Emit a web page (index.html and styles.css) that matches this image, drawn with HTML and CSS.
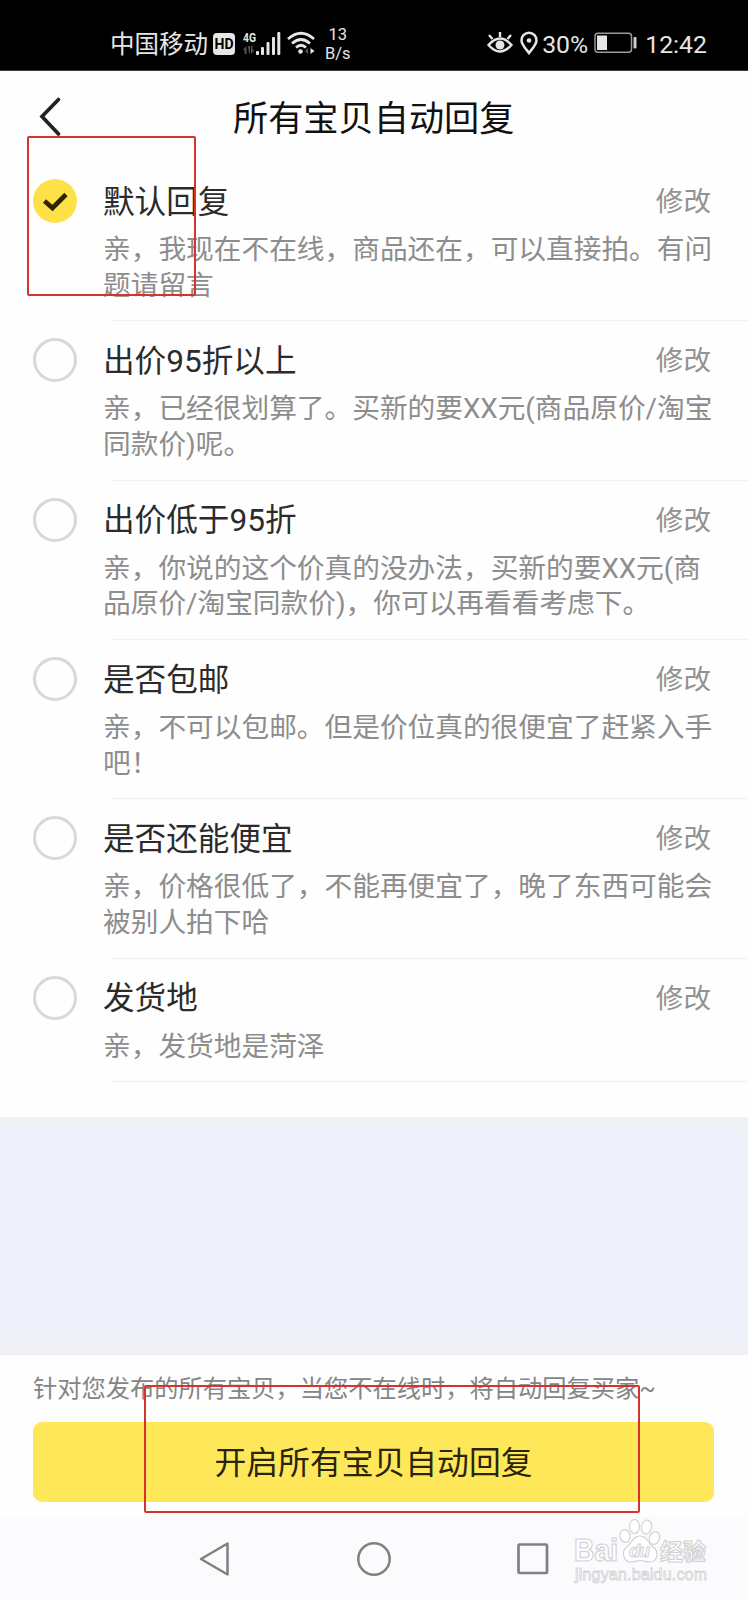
FILE: index.html
```html
<!DOCTYPE html>
<html lang="zh-CN">
<head>
<meta charset="utf-8">
<title>所有宝贝自动回复</title>
<link rel="stylesheet" href="styles.css">
</head>
<body>
<div class="screen">
  <div class="status">
    <div class="status-left">
      <span class="carrier">中国移动</span>
      <span class="hd">HD</span>
      <svg class="signal" width="38" height="26" viewBox="0 0 38 26">
        <text class="g4" x="0" y="11" textLength="13" lengthAdjust="spacingAndGlyphs">4G</text>
        <g fill="#555"><path d="M0 19l3.500-4v8h-2v-4zM5 15h2v8l-1-1zM8 15h1.500v4h2l-3.500 4z"/></g>
        <g fill="#e6e6e6"><rect x="13" y="20" width="3" height="4" rx="1"/><rect x="18" y="16" width="3" height="8" rx="1"/><rect x="23.500" y="11" width="3" height="13" rx="1"/><rect x="29" y="6" width="3" height="18" rx="1"/><rect x="34.300" y="1" width="3" height="23" rx="1"/></g>
      </svg>
      <svg class="wifi" width="29" height="24" viewBox="0 0 29 24">
        <g fill="none" stroke="#e6e6e6" stroke-width="2.700"><path d="M1 8Q14 -3.500 27 8"/><path d="M5 12.500Q14 4.500 23 12.500"/><path d="M9 16.500Q14 12 19 16.500"/></g>
        <circle cx="13.500" cy="20.500" r="2.300" fill="#e6e6e6"/>
        <path d="M21 17v6l-3-3z" fill="#555"/><path d="M23.500 17v6l4-3z" fill="#e6e6e6"/>
      </svg>
      <span class="speed"><span>13</span><span>B/s</span></span>
    </div>
    <div class="status-right">
      <svg class="eye" width="26" height="24" viewBox="0 0 26 24">
        <g fill="none" stroke="#e6e6e6" stroke-width="2.400"><path d="M1.500 14Q13 1 24.500 14Q13 27 1.500 14z"/><path d="M13 6V1M5.500 8L2 4M20.500 8L24 4"/></g>
        <circle cx="13" cy="14" r="4.500" fill="#e6e6e6"/>
      </svg>
      <svg class="pin" width="18" height="24" viewBox="0 0 18 24">
        <path d="M9 22C6 18 1.500 13.500 1.500 9.500a7.500 7.800 0 0 1 15 0C16.500 13.500 12 18 9 22z" fill="none" stroke="#e6e6e6" stroke-width="2.500"/>
        <circle cx="9" cy="9.500" r="2.300" fill="#e6e6e6"/>
      </svg>
      <span class="percent">30%</span>
      <svg class="battery" width="43" height="22" viewBox="0 0 43 22">
        <rect x="1" y="1.200" width="36.500" height="19" rx="3" fill="none" stroke="#999" stroke-width="1.500"/>
        <rect x="3" y="3.500" width="10" height="14.500" fill="#e6e6e6"/><rect x="39.500" y="5" width="3" height="11.500" rx="1" fill="#ccc"/>
      </svg>
      <span class="clock">12:42</span>
    </div>
  </div>

  <header class="header">
    <svg class="back" width="24" height="42" viewBox="0 0 24 42"><path d="M20.500 3.500L4 20.500L20.500 38" fill="none" stroke="#222" stroke-width="3.700" stroke-linecap="round"/></svg>
    <h1 class="title">所有宝贝自动回复</h1>
  </header>

  <main class="list">
    <section class="item">
      <span class="radio checked"><svg width="44" height="44" viewBox="0 0 44 44"><path d="M11.500 22L19.500 29L33 15.500" fill="none" stroke="#2e2400" stroke-width="4.600"/></svg></span>
      <div class="content"><div class="row"><h2 class="name">默认回复</h2><span class="edit">修改</span></div>
      <p class="desc">亲，我现在不在线，商品还在，可以直接拍。有问<br>题请留言</p></div>
    </section>
    <section class="item">
      <span class="radio"></span>
      <div class="content"><div class="row"><h2 class="name">出价95折以上</h2><span class="edit">修改</span></div>
      <p class="desc">亲，已经很划算了。买新的要XX元(商品原价/淘宝<br>同款价)呢。</p></div>
    </section>
    <section class="item">
      <span class="radio"></span>
      <div class="content"><div class="row"><h2 class="name">出价低于95折</h2><span class="edit">修改</span></div>
      <p class="desc">亲，你说的这个价真的没办法，买新的要XX元(商<br>品原价/淘宝同款价)，你可以再看看考虑下。</p></div>
    </section>
    <section class="item">
      <span class="radio"></span>
      <div class="content"><div class="row"><h2 class="name">是否包邮</h2><span class="edit">修改</span></div>
      <p class="desc">亲，不可以包邮。但是价位真的很便宜了赶紧入手<br>吧！</p></div>
    </section>
    <section class="item">
      <span class="radio"></span>
      <div class="content"><div class="row"><h2 class="name">是否还能便宜</h2><span class="edit">修改</span></div>
      <p class="desc">亲，价格很低了，不能再便宜了，晚了东西可能会<br>被别人拍下哈</p></div>
    </section>
    <section class="item short">
      <span class="radio"></span>
      <div class="content"><div class="row"><h2 class="name">发货地</h2><span class="edit">修改</span></div>
      <p class="desc">亲，发货地是菏泽</p></div>
    </section>
  </main>

  <div class="spacer"></div>

  <footer class="footer">
    <p class="hint">针对您发布的所有宝贝，当您不在线时，将自动回复买家~</p>
    <button class="enable">开启所有宝贝自动回复</button>
  </footer>

  <nav class="nav">
    <svg width="36" height="40" viewBox="0 0 36 40"><path d="M4 20L30.500 4.500V35.500z" fill="none" stroke="#808082" stroke-width="2.500" stroke-linejoin="round"/></svg>
    <svg width="36" height="40" viewBox="0 0 36 40"><circle cx="18" cy="20" r="15.700" fill="none" stroke="#808082" stroke-width="2.500"/></svg>
    <svg width="36" height="40" viewBox="0 0 36 40"><rect x="3.500" y="5.500" width="28.500" height="28.500" rx="1" fill="none" stroke="#808082" stroke-width="2.700"/></svg>
  </nav>

  <div class="mark mark-check"></div>
  <div class="mark mark-button"></div>
  <svg class="watermark" width="140" height="66" viewBox="0 0 140 66">
    <g fill="#fff" stroke="#d2d2d5" stroke-width="1.200">
      <text class="wm-logo" x="2" y="43" textLength="44" lengthAdjust="spacingAndGlyphs">Bai</text>
      <ellipse cx="53" cy="18" rx="5" ry="6.500" transform="rotate(-12 53 18)"/><ellipse cx="62.500" cy="8.500" rx="5" ry="7"/><ellipse cx="74.500" cy="9" rx="5" ry="7" transform="rotate(12 74.500 9)"/><ellipse cx="82.500" cy="20" rx="5" ry="6.500" transform="rotate(20 82.500 20)"/>
      <path d="M68 18C61 18 60 25 55 29C49 33 51 44 59 44C63 44 65 42.500 68 42.500S74 44 78 44C86 44 87 33 81 29C76 25 75 18 68 18z"/>
      <text class="wm-du" x="57" y="39" textLength="21">du</text>
      <text class="wm-cn" x="88" y="42" textLength="46">经验</text>
      <text class="wm-url" x="3" y="61.500" textLength="132">jingyan.baidu.com</text>
    </g>
  </svg>
</div>
</body>
</html>
```
FILE: styles.css
```css
* { box-sizing: border-box; margin: 0; padding: 0; }
body { background: #fefefe; font-family: Roboto, "Noto Sans CJK SC", sans-serif; text-spacing-trim: space-all; }
svg { display: block; flex: none; }
.screen { position: relative; width: 748px; height: 1600px; overflow: hidden; display: flex; flex-direction: column; background: #fefefe; white-space: nowrap; }

.status { height: 71px; flex: none; background: #000; border-bottom: 1px solid #3d3a3e; color: #e6e6e6; display: flex; justify-content: space-between; padding: 17px 41px 0 110px; }
.status-left, .status-right { display: flex; align-items: center; height: 53px; }
.carrier { font-size: 24.500px; line-height: 30px; width: 98px; padding-top: 2px; }
.hd { margin-left: 5px; width: 22px; height: 22px; border-radius: 4px; background: #e6e6e6; color: #000; font-size: 14px; line-height: 22px; font-weight: 700; text-align: center; }
.signal { margin-left: 8px; }
.g4 { font-size: 13px; font-weight: 700; fill: #e6e6e6; }
.wifi { margin-left: 6px; margin-top: -2px; }
.speed { margin-left: 9px; display: flex; flex-direction: column; align-items: center; font-size: 16.500px; line-height: 19px; }
.eye { margin-top: -2px; }
.pin { margin-left: 7px; margin-top: -1px; }
.percent { margin-left: 4px; font-size: 24.800px; padding-top: 1px; }
.battery { margin-left: 6px; margin-top: -1px; }
.clock { margin-left: 8px; font-size: 24.800px; padding-top: 1px; }

.header { height: 93px; flex: none; display: flex; align-items: center; padding-left: 38px; }
.back { margin-top: -1px; }
.title { margin-left: 171px; margin-top: 3px; font-size: 35.200px; line-height: 46px; font-weight: 400; color: #111; }

.list { flex: none; height: 953px; }
.item { height: 159.350px; display: flex; padding-left: 33px; }
.item.short { height: 123px; }
.radio { flex: none; width: 44px; height: 44px; margin-top: 15px; border: 3px solid #d8d8d8; border-radius: 50%; }
.radio.checked { border: 0; background: #fde147; }
.content { flex: 1; margin-left: 26px; padding-top: 17px; position: relative; }
.content::after { content: ""; display: block; position: absolute; left: 8px; right: 0; bottom: 2px; height: 1px; background: #f0f0f0; }
.row { display: flex; justify-content: space-between; align-items: center; height: 42px; padding-right: 37px; }
.name { padding-top: 1px; font-size: 31.600px; font-weight: 400; line-height: 42px; color: #2b2b2b; }
.edit { font-size: 27.600px; line-height: 42px; color: #929292; }
.desc { margin-top: 9px; font-size: 27.700px; line-height: 35.500px; color: #8d8d8d; }

.spacer { height: 238px; flex: none; background: linear-gradient(#f1f1f5 0, #f0f1f6 10px, #edf0fa 18px, #edf0fa 216px, #eef0f5 226px); }
.footer { height: 162px; flex: none; padding: 17px 34px 0 33px; }
.hint { font-size: 24.250px; line-height: 34px; color: #858585; }
.enable { display: block; margin-top: 16px; width: 681px; height: 80px; padding-bottom: 4px; border: 0; border-radius: 9px; background: #fee85a; font-family: inherit; font-size: 31.800px; color: #2a2408; }
.nav { flex: 1; background: #fbfbfd; display: flex; justify-content: center; gap: 123px; padding-top: 22px; }

.mark { position: absolute; border: 2px solid #d5332d; border-radius: 2px; }
.mark-check { left: 27px; top: 136px; width: 169px; height: 160px; }
.mark-button { left: 144px; top: 1385px; width: 496px; height: 128px; }
.watermark { position: absolute; left: 572px; top: 1518px; }
.wm-logo { font: 700 31px "Liberation Sans", sans-serif; }
.wm-du { font: italic 700 18px "Liberation Sans", sans-serif; stroke-width: 1px; }
.wm-cn { font: 700 23px "Noto Sans CJK SC", sans-serif; }
.wm-url { font: 400 16px "Liberation Sans", sans-serif; stroke-width: 0.8px; }
```
